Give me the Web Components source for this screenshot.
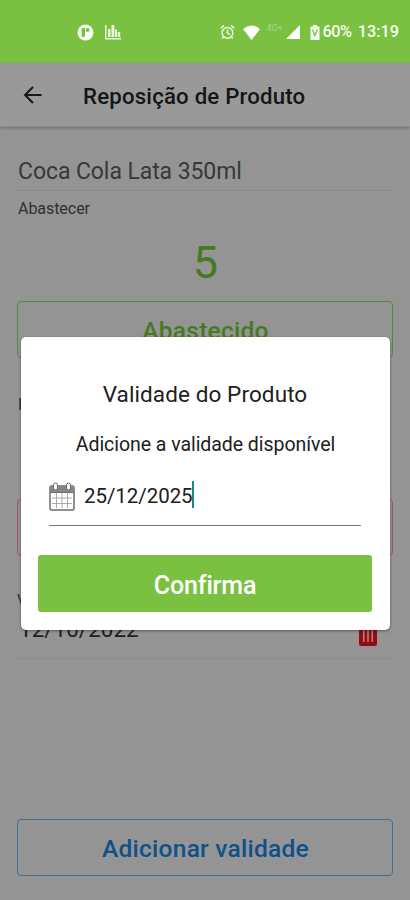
<!DOCTYPE html>
<html lang="pt-BR">
<head>
<meta charset="utf-8">
<title>Reposição de Produto</title>
<style>
html,body{margin:0;height:100%;background:#949494;overflow:hidden}
body{font-family:Roboto,"Liberation Sans",sans-serif}
</style>
</head>
<body>
<app-screen></app-screen>
<script>
const define = (name, html) => customElements.define(name, class extends HTMLElement {
  constructor() {
    super();
    this.attachShadow({ mode: 'open' }).innerHTML = html;
  }
});

define('status-bar', `
<style>
:host{display:flex;box-sizing:border-box;height:63px;background:#7ac142;color:#f6fcef;align-items:center;padding:1px 11px 0 77px;font-weight:500;font-size:16.3px;line-height:20px}
svg{display:block;flex:none}
.gap{flex:1}
.net{font-size:9px;font-weight:400;color:#a6d67e;width:18px;margin:-8px 2px 0 6px;line-height:10px;white-space:nowrap}
.pct{margin-right:6px;letter-spacing:-.4px}
</style>
<svg width="17" height="17" viewBox="0 0 17 17"><circle cx="8.5" cy="8.5" r="8" fill="#f6fcef"/><path d="M4.600 5.200q0-1.200 1.200-1.200H8v7.500q0 1.500-1.700 1.500T4.600 11.500zM9 4.300h2.200q1.200 0 1.200 1.700T11.200 7.700H9z" fill="#7ac142"/></svg>
<svg style="margin-left:11px" width="16" height="16" viewBox="0 0 16 16" fill="#e9f7dc"><path d="M0 1h1.500v13H16v1.600H0zM3 5h2.500v8H3zM6.500 1h2.800v12H6.500zM10 5.500h2V13h-2zM12.800 8h2.400v5h-2.400z"/></svg>
<span class="gap"></span>
<svg width="15" height="16" viewBox="0 0 15 16" fill="none" stroke="#eaf7df" stroke-width="1.5"><circle cx="7.5" cy="8.8" r="5.4"/><path d="M7.5 5.5v3.6l2.4 1.5M.7 4.2 4 1.4M14.3 4.2 11 1.4M3.5 13 2.2 14.5M11.5 13l1.3 1.5"/></svg>
<svg style="margin-left:8px" width="17" height="15" viewBox="0 0 17 15"><path d="M0 4Q8.5-3 17 4L8.5 15z" fill="#fff"/></svg>
<span class="net">4G+</span>
<svg width="14" height="14" viewBox="0 0 14 14"><path d="M14 0v14H0z" fill="#fff"/></svg>
<svg style="margin:0 2px 0 10px" width="10" height="15" viewBox="0 0 10 15"><path d="M3 0h4v1.500h2.500V15H.500V1.500H3z" fill="#f6fcef"/><path d="m2.500 4.500 2.300 6 2.700-6" fill="none" stroke="#7ac142" stroke-width="1.3"/></svg>
<span class="pct">60%</span><span>13:19</span>`);

define('app-header', `
<style>
:host{display:flex;box-sizing:border-box;height:64px;background:#999;align-items:center;padding:2px 0 0 23px;position:relative;box-shadow:0 1px 3px rgba(0,0,0,.25);border-bottom:1px solid #8a8a8a}
svg{display:block;margin:-2px 40px 0 0;flex:none}
h1{margin:0;font-size:22.2px;line-height:28px;font-weight:500;color:#151515;letter-spacing:.2px;white-space:nowrap}
</style>
<svg width="20" height="20" viewBox="0 0 20 20" fill="none" stroke="#161616" stroke-width="2"><path d="M18.500 10H2M10 2 2 10l8 8"/></svg>
<h1><slot></slot></h1>`);

define('outline-button', `
<style>
:host{display:flex;box-sizing:border-box;height:57px;border:1.5px solid var(--edge);border-radius:4px;color:var(--ink);align-items:center;justify-content:center;font-weight:500;font-size:24.5px;line-height:30px;letter-spacing:.25px;white-space:nowrap;padding:3px 0 0 1px}
</style><slot></slot>`);

define('product-page', `
<style>
:host{display:flex;flex-direction:column;height:773px;box-sizing:border-box;padding:0 17px 24px;background:#949494}
.name{margin-top:28px;height:36px;border-bottom:1px solid #898989;box-sizing:border-box;font-size:23px;line-height:33px;color:#38383c;letter-spacing:-.08px;padding-left:1px}
.sub{font-size:16px;line-height:20px;margin-top:8px;color:#303030;padding-left:1px;letter-spacing:-.05px}
.qty{font-size:45px;line-height:54px;height:54px;margin:17px 0 11px;text-align:center;color:#467a22;padding-left:1px}
.label{font-size:16px;line-height:20px;color:#303030;padding-left:0}
.row{display:flex;justify-content:space-between;height:43px;border-bottom:1px solid #8c8c8c;align-items:flex-start;margin-top:4px;padding:0 15px 0 2px}
.date{font-size:22.5px;line-height:28px;color:#202020;letter-spacing:0}
.grow{flex:1}
</style>
<div class="name">Coca Cola Lata 350ml</div>
<div class="sub">Abastecer</div>
<div class="qty">5</div>
<outline-button style="--edge:#578b3c;--ink:#467a22">Abastecido</outline-button>
<div class="label" style="margin-top:37px;padding-left:1px">R</div>
<outline-button style="--edge:#a6555b;--ink:#86161c;margin-top:84px"></outline-button>
<div class="label" style="margin-top:35px">V</div>
<div class="row"><span class="date">12/10/2022</span>
<svg width="20" height="32" viewBox="0 0 20 32"><path d="M1 6h18v23q0 2-2 2H3q-2 0-2-2zM0 2h20v3H0zM7 0h6v2H7z" fill="#920d12"/><path d="M5.800 13v14M10 13v14M14.200 13v14" stroke="#bd8588" stroke-width="1.5"/></svg></div>
<div class="grow"></div>
<outline-button style="--edge:#426f94;--ink:#10508a">Adicionar validade</outline-button>`);

define('date-field', `
<style>
:host{display:flex;box-sizing:border-box;height:46px;margin:0 11px;border-bottom:1.5px solid #777;align-items:flex-start}
svg{display:block;margin-top:2px;flex:none}
span{font-size:20.5px;line-height:28px;margin-left:9px;margin-top:2px;color:#202020;letter-spacing:-.05px}
i{width:2px;height:27px;background:#168b7b;margin:1px 0 0 -1px}
</style>
<svg width="26" height="29" viewBox="0 0 26 29" fill="none" stroke="#6e6e6e"><rect x="1" y="4" width="24" height="24" rx="1.5" stroke-width="1.5"/><path d="M1 4h24v6H1z" fill="#858585" stroke="none"/><path d="M3 16h20M3 21.500h20M7.500 11v15M13 11v15M18.500 11v15" stroke="#aaa"/><path d="M1 10.500h24" stroke-width="1"/><rect x="4.500" y="1" width="4" height="7" rx="2" fill="#fff"/><rect x="17.500" y="1" width="4" height="7" rx="2" fill="#fff"/></svg>
<span><slot></slot></span><i></i>`);

define('modal-dialog', `
<style>
:host{display:flex;flex-direction:column;box-sizing:border-box;position:absolute;left:21px;top:337px;width:369px;height:293px;background:#fff;border-radius:5px;padding:42px 18px 18px 17px;box-shadow:0 1px 3px rgba(0,0,0,.4)}
h2{margin:0;text-align:center;font-weight:400;font-size:22.5px;line-height:30px;color:#202020;letter-spacing:.1px}
p{margin:23px 0 0;text-align:center;font-size:19.5px;line-height:26px;color:#202020;letter-spacing:-.05px;white-space:nowrap;padding-left:1px}
date-field{margin-top:22px}
.ok{margin-top:auto;height:57px;border-radius:3px;background:#7ac142;color:#fff;display:flex;align-items:center;justify-content:center;font-size:25px;font-weight:500;letter-spacing:-.15px;padding-top:3px;box-sizing:border-box}
</style>
<h2>Validade do Produto</h2>
<p>Adicione a validade disponível</p>
<date-field>25/12/2025</date-field>
<div class="ok">Confirma</div>`);

define('app-screen', `
<style>:host{display:block;position:relative;width:410px;height:900px;overflow:hidden}</style>
<status-bar></status-bar>
<app-header>Reposição de Produto</app-header>
<product-page></product-page>
<modal-dialog></modal-dialog>`);
</script>
</body>
</html>
